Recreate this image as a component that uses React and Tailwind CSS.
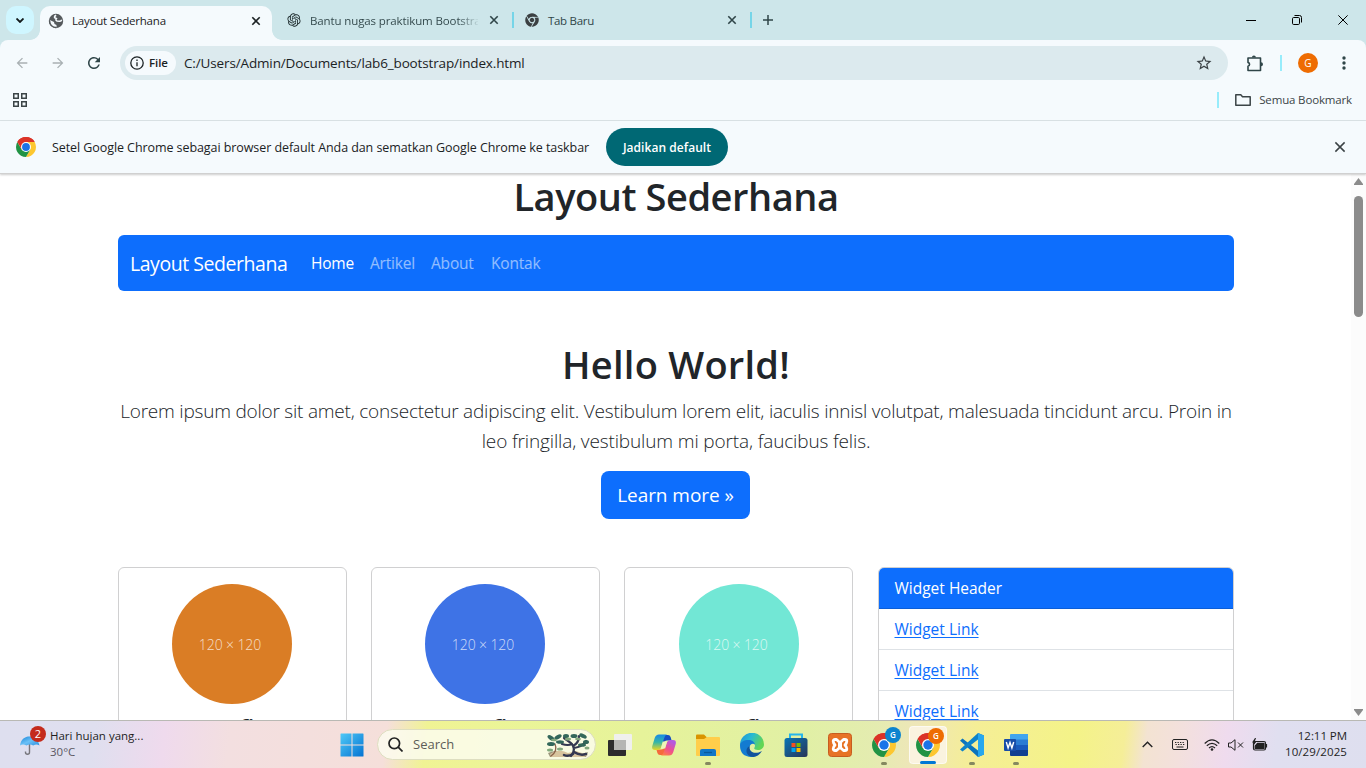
import React from "react";
import { MdStarBorder, MdArrowBack, MdArrowForward, MdRefresh } from "react-icons/md";
import { FaChrome } from "react-icons/fa";
import { RiOpenaiFill } from "react-icons/ri";

const ui = "font-['Open_Sans','Noto_Sans',sans-serif] whitespace-nowrap";

function Cross({ size = 8, width = 1.6 }) {
  return (
    <svg width={size} height={size} viewBox="0 0 8 8" stroke="currentColor" strokeWidth={(width * 8) / size} className="shrink-0 overflow-visible">
      <path d="M0.3 0.3 7.7 7.7M7.7 0.3 0.3 7.7" />
    </svg>
  );
}

function Globe() {
  return (
    <svg width="16" height="16" viewBox="0 0 16 16" className="shrink-0">
      <circle cx="8" cy="8" r="7.2" fill="#55595c" />
      <path d="M8.200 2.300Q6.200 3 6.600 4.800L8.400 5.600Q7.200 7.300 9 8L11.600 8.200Q13.200 8.400 13.700 6.800" fill="none" stroke="#f5fafd" strokeWidth="1.500" />
      <path d="M1.800 7 6 9 6.500 11 8.500 12V14.300Q4.500 14.500 2.400 11Z" fill="#f5fafd" />
      <path d="M1.600 7.500A6.500 6.500 0 0 0 8 14.500" fill="none" stroke="#55595c" strokeWidth="1.400" />
    </svg>
  );
}

function ChromeLogo({ size }) {
  return (
    <svg width={size} height={size} viewBox="0 0 24 24" className="shrink-0">
      <path d="M12 12 1.61 6A12 12 0 0 1 22.39 6Z" fill="#db3327" />
      <path d="M12 12V6H22.39A12 12 0 0 1 12 24L17.2 15Z" fill="#fdc730" />
      <path d="M12 12 17.2 15 12 24A12 12 0 0 1 1.61 6L6.8 15Z" fill="#219344" />
      <path d="M12 6H22.39A12 12 0 0 0 1.61 6L6.8 15 12 12Z" fill="#db3327" />
      <circle cx="12" cy="12" r="6" fill="#fff" />
      <circle cx="12" cy="12" r="4.7" fill="#1a73e8" />
    </svg>
  );
}

function TabStrip() {
  return (
    <div className="flex h-10 shrink-0 bg-[#cde6ea] text-[#2f4548]">
      <div className="ml-1.5 mt-1.5 flex size-7 items-center justify-center rounded-[10px] bg-[#cff6ff] text-[#12191a]">
        <svg width="8" height="5" viewBox="0 0 8 5" fill="none" stroke="currentColor" strokeWidth="1.8"><path d="M.5.5 4 4 7.5.5" /></svg>
      </div>
      <div className="relative ml-1.5 mt-1.5 flex h-[34px] w-[232px] items-center rounded-t-[10px] bg-[#f5fafd] pb-[5px] pl-2 text-[#1c2224]">
        <span className="absolute -left-2.5 bottom-0 size-2.5 bg-[radial-gradient(circle_at_0_0,transparent_9.5px,#f5fafd_10.2px)]" />
        <span className="absolute -right-2.5 bottom-0 size-2.5 bg-[radial-gradient(circle_at_100%_0,transparent_9.5px,#f5fafd_10.2px)]" />
        <Globe />
        <span className={`${ui} ml-2 flex-1 text-[11.5px] tracking-[-0.2px]`}>Layout Sederhana</span>
        <span className="mr-3 flex"><Cross /></span>
      </div>
      <div className="ml-3.5 flex h-10 w-[228px] items-center">
        <RiOpenaiFill className="size-4 text-[#1c2a2c]" />
        <span className={`${ui} ml-2 mt-px w-[168px] overflow-hidden bg-[linear-gradient(90deg,#2f4548_148px,transparent_170px)] bg-clip-text text-[11.5px] tracking-[-0.12px] text-transparent`}>Bantu nugas praktikum Bootstra</span>
        <span className="ml-3 flex"><Cross /></span>
        <span className="ml-3.5 h-4 w-0.5 shrink-0 bg-[#76d5e8]" />
      </div>
      <div className="ml-2.5 flex h-10 w-[228px] items-center">
        <FaChrome className="ml-px size-3.5 text-[#3b4042]" />
        <span className={`${ui} ml-[9px] mt-px flex-1 text-[11.5px] tracking-[-0.3px]`}>Tab Baru</span>
        <Cross />
        <span className="ml-3.5 h-4 w-0.5 bg-[#76d5e8]" />
      </div>
      <svg width="10" height="10" viewBox="0 0 10 10" className="ml-[11px] mt-[15px]" stroke="currentColor" strokeWidth="1.5"><path d="M5 0v10M0 5h10" /></svg>
      <div className="ml-auto flex items-center text-black">
        <span className="mr-9 h-px w-2.5 bg-black" />
        <svg width="10" height="10" viewBox="0 0 10 10" className="mr-9" fill="none" stroke="currentColor"><rect x=".5" y="2.5" width="7" height="7" rx="1.2" /><path d="M2.5.5h5q2 0 2 2v5" /></svg>
        <span className="mr-[18px] flex"><Cross size={10} width={1} /></span>
      </div>
    </div>
  );
}

function Toolbar() {
  return (
    <div className="shrink-0 bg-[#cde6ea]">
      <div className="h-[81px] rounded-t-lg border-b border-[#dbe3e6] bg-[#f5fafd]">
        <div className="flex h-[46px] items-center text-[#2f4548]">
          <MdArrowBack className="ml-3.5 size-4 text-[#a9b0b3]" />
          <MdArrowForward className="ml-5 size-4 text-[#a9b0b3]" />
          <MdRefresh className="ml-[19px] size-[18px]" />
          <div className="ml-[17px] flex h-[34px] w-[1108px] items-center rounded-full bg-[#dceaee] text-[#1b2224]">
            <div className="ml-[5px] flex h-6 w-[51px] items-center rounded-full bg-[#f5fafd] pl-[5px]">
              <svg width="14" height="14" viewBox="0 0 14 14" fill="none" stroke="currentColor" strokeWidth="1.3"><circle cx="7" cy="7" r="6.2" /><path d="M7 6.3v4M7 3.5v1.4" /></svg>
              <span className={`${ui} ml-[5px] text-[11.5px] font-semibold tracking-[-0.1px]`}>File</span>
            </div>
            <span className={`${ui} ml-2 text-[13.5px] tracking-[-0.14px]`}>C:/Users/Admin/Documents/lab6_bootstrap/index.html</span>
            <MdStarBorder className="ml-auto mr-[15px] size-[18px] text-[#3b4245]" />
          </div>
          <svg width="18" height="17" viewBox="0 0 18 17" className="ml-[18px]" fill="none" stroke="currentColor" strokeWidth="1.6" strokeLinejoin="round"><path d="M2 3H14.5V15.500H2V11.300A2 2 0 0 0 2 7.400Z" /><path d="M5.900 2.500a2 2 0 0 1 4 0ZM15 7.300a2 2 0 0 1 0 4Z" fill="currentColor" stroke="none" /></svg>
          <span className="ml-4 h-4 w-0.5 bg-[#97ecfb]" />
          <span className={`${ui} ml-4 flex size-5 items-center justify-center rounded-full bg-[#ee6c02] text-[10px] text-white`}>G</span>
          <svg width="4" height="14" viewBox="0 0 4 14" className="ml-6" fill="currentColor"><circle cx="2" cy="2" r="1.7" /><circle cx="2" cy="7" r="1.7" /><circle cx="2" cy="12" r="1.7" /></svg>
        </div>
        <div className="flex h-7 items-center text-[#3b4447]">
          <svg width="14" height="14" viewBox="0 0 14 14" className="ml-[13px]" fill="none" stroke="currentColor" strokeWidth="1.5"><path d="M.75.75h4.500v4.500H.75zM8.750.75h4.500v4.500h-4.500zM.75 8.750h4.500v4.500H.75zM8.750 8.750h4.500v4.500h-4.500z" /></svg>
          <span className="ml-auto h-4 w-0.5 bg-[#97ecfb]" />
          <svg width="16" height="12" viewBox="0 0 16 12" className="ml-4" fill="none" stroke="currentColor" strokeWidth="1.5" strokeLinejoin="round"><path d="M.8.8h5l1.700 1.900h7.700v8.500H.8Z" /></svg>
          <span className={`${ui} ml-2 mr-3.5 text-[11.5px] tracking-[-0.15px]`}>Semua Bookmark</span>
        </div>
      </div>
    </div>
  );
}

function InfoBar() {
  return (
    <div className="z-10 flex h-[53px] shrink-0 items-center border-b border-[#d0d0d0] bg-[#f5fafd] pl-4 text-[#1b2224] shadow-[0_1px_2px_rgba(0,0,0,0.2)]">
      <ChromeLogo size={20} />
      <span className={`${ui} ml-4 mt-0.5 w-[554px] text-[12.5px] tracking-[-0.075px]`}>Setel Google Chrome sebagai browser default Anda dan sematkan Google Chrome ke taskbar</span>
      <button className={`${ui} h-[38px] w-[122px] rounded-full bg-[#006874] pt-px text-[12px] font-semibold tracking-[0.05px] text-white`}>Jadikan default</button>
      <span className="ml-auto mr-[21px] flex text-[#3b4245]"><Cross size={10} width={1.5} /></span>
    </div>
  );
}

function Placeholder({ color }) {
  return (
    <div className="flex h-[300px] w-[229px] flex-col items-center rounded-md border border-[#d0d0d1] pt-4">
      <div className={`${ui} flex size-[120px] shrink-0 items-center justify-center rounded-full pr-1 text-[14px] font-light tracking-[-0.1px] text-white/75 ${color}`}>120 × 120</div>
      <h4 className={`${ui} mt-[9px] text-[23px] font-semibold leading-[31px]`}>Grafis</h4>
    </div>
  );
}

function Page() {
  return (
    <div className="flex min-h-0 flex-1 bg-white text-[#212529]">
      <div className="h-[546px] flex-1 overflow-hidden pl-[118px] pr-[117px]">
        <h1 className={`${ui} h-[61px] text-center text-[38px] font-semibold leading-[45px] tracking-[-0.45px]`}>Layout Sederhana</h1>
        <nav className={`${ui} flex h-14 items-center rounded-md bg-[#0d6efd] pl-3 pt-0.5 text-[15.5px] tracking-[-0.2px] text-white`}>
          <span className="w-[181px] text-[19.5px] tracking-[-0.45px]">Layout Sederhana</span>
          <span className="w-[59px]">Home</span>
          <span className="w-[61px] text-white/55">Artikel</span>
          <span className="w-[60px] text-white/55">About</span>
          <span className="text-white/55">Kontak</span>
        </nav>
        <section className={`${ui} pt-12 text-center`}>
          <h2 className="mt-px text-[38px] font-semibold leading-12 tracking-[0.25px]">Hello World!</h2>
          <p className="mt-2 text-[19px] font-light leading-[30px] tracking-[-0.215px]">
            <span>Lorem ipsum dolor sit amet, consectetur adipiscing elit. Vestibulum lorem elit, iaculis innisl volutpat, malesuada tincidunt arcu. Proin in</span>
            <br />
            <span className="tracking-[-0.14px]">leo fringilla, vestibulum mi porta, faucibus felis.</span>
          </p>
          <button className="mr-0.5 mt-[15px] h-12 w-[149px] rounded-lg bg-[#0d6efd] pl-px pt-px text-[19px] tracking-[-0.05px] text-white">Learn more »</button>
        </section>
        <div className="mt-12 flex">
          <div className="flex gap-6">
            <Placeholder color="mr-px bg-[#da7d25]" />
            <Placeholder color="mr-px bg-[#3e73e6]" />
            <Placeholder color="bg-[#72e7d5]" />
          </div>
          <div className={`${ui} ml-[25px] flex h-[300px] w-[356px] flex-col overflow-hidden rounded-md border border-[#d0d0d1] text-[15.5px]`}>
            <div className="flex h-[41px] shrink-0 items-center border-b border-[#0b5ed7] bg-[#0d6efd] pl-[15.5px] pt-0.5 text-white">Widget Header</div>
            {[0, 1, 2].map((i) => (
              <div key={i} className="flex h-[41px] shrink-0 items-center border-b border-[#dee2e6] pl-[15.5px] pt-0.5">
                <a className="text-[#0d6efd] underline underline-offset-2">Widget Link</a>
              </div>
            ))}
          </div>
        </div>
      </div>
      <div className="flex w-[15px] flex-col items-center bg-[#fcfcfc] pb-1 pt-1">
        <svg width="9" height="7" viewBox="0 0 9 7" fill="#8b8b8b"><path d="M4.500 0 9 6v1H0V6Z" /></svg>
        <div className="mt-[11px] h-[121px] w-[9px] rounded-full bg-[#8b8b8b]" />
        <svg width="9" height="7" viewBox="0 0 9 7" className="mt-auto" fill="#8b8b8b"><path d="M0 0h9v1L4.500 7 0 1Z" /></svg>
      </div>
    </div>
  );
}

function TaskbarApp({ children, dot, active }) {
  return (
    <div className={`relative flex h-[38px] w-[38px] shrink-0 items-center justify-center rounded ${active ? "border border-white/60 bg-[#faf3df]" : ""}`}>
      {children}
      {dot && <span className="absolute -bottom-px h-[3px] w-1.5 rounded-full bg-[#85885f]" />}
      {active && <span className="absolute -bottom-px h-[3px] w-4 rounded-full bg-[#0078d4]" />}
    </div>
  );
}

function Badge({ color }) {
  return <span className={`${ui} absolute right-0.5 top-px flex size-4 items-center justify-center rounded-full text-[8px] font-semibold text-white ${color}`}>G</span>;
}

function Taskbar() {
  return (
    <div className="flex h-12 shrink-0 border-t border-[#b9b9b4] bg-[linear-gradient(97deg,#dedfef_0px,#dfdfef_95px,#efdaed_165px,#f3dfe0_230px,#f5dfda_385px,#f0f394_425px,#eaf598_520px,#e6f39a_640px,#e1f0a5_800px,#e4ecb0_870px,#eee6b8_910px,#f5ee96_970px,#f4f388_1070px,#f5ee98_1118px,#f3e3d2_1140px,#f3e0dd_1175px,#efdbee_1220px,#e0dff0_1270px,#dedfef_1366px)] text-[#1e1e1e]">
      <div className="relative ml-5 w-[30px]">
        <svg width="20" height="20" viewBox="0 0 20 20" className="mt-[14px]">
          <defs><linearGradient id="umb" x1="0" y1="0" x2="1" y2="1"><stop stopColor="#1784d8" /><stop offset=".5" stopColor="#6bc1f7" /><stop offset="1" stopColor="#2b8fe0" /></linearGradient></defs>
          <path d="M9.500 8v9.200a2 2 0 0 1-4 0v-.7" fill="none" stroke="#77767c" strokeWidth="1.4" />
          <path d="M0 10.500C1 4 5 1.500 9.500 1.500S18 4 19.500 10.500Q16.500 8.500 13.200 10.500 9.700 8.500 6.500 10.500 3 8.500 0 10.500Z" fill="url(#umb)" />
        </svg>
        <span className={`${ui} absolute left-2.5 top-[5px] flex size-4 items-center justify-center rounded-full bg-[#c42b1c] text-[11px] text-white`}>2</span>
      </div>
      <div className={`${ui} mt-[7px] w-[95px] text-[11.5px] leading-4`}>
        <div>Hari hujan yang...</div>
        <div className="text-[#5b5862]">30°C</div>
      </div>
      <div className="ml-[195px] flex h-[47px] items-center">
        <svg width="24" height="24" viewBox="0 0 24 24">
          <defs><linearGradient id="win" x1="0" y1="0" x2="1" y2="1"><stop stopColor="#4fc9f7" /><stop offset="1" stopColor="#0473d2" /></linearGradient></defs>
          <path d="M1 .5h10.500V11.500H.5V1Q.5.5 1 .5ZM12.500.5H23q.5 0 .5.5V11.500h-11ZM.5 12.500h11v11H1q-.5 0-.5-.5ZM12.500 12.500h11V23q0 .5-.5.5H12.500Z" fill="url(#win)" />
        </svg>
        <div className="ml-[13px] flex h-[31px] w-[219px] items-center rounded-full border border-[#dedec0] bg-[#fbfbee]/85">
          <svg width="15" height="15" viewBox="0 0 15 15" className="ml-2.5" fill="none" stroke="#222" strokeWidth="1.7"><circle cx="6.300" cy="6.300" r="5.300" /><path d="m10.200 10.200 4.300 4.300" /></svg>
          <span className={`${ui} ml-2.5 text-[13px] text-[#5d5d58]`}>Search</span>
          <svg width="44" height="26" viewBox="0 0 44 26" className="ml-auto mr-[5px]">
            <path d="M2 21Q10 17 20 21T42 20L40 25H4Z" fill="#9a967c" />
            <path d="M4 22q8-6 18-1l8-2 12 4-4 2H5Z" fill="#d8c49e" />
            <g fill="none" stroke="#343850" strokeLinecap="round">
              <path d="M25 24Q31 17 25 11L18 6M27 14Q33 11 33 4M28 16Q36 15 40 9M26 12Q22 14 16 12" strokeWidth="2.200" />
              <path d="M28 20q6 4 12 2M27 22q-5 3-9 1" strokeWidth="2.500" />
              <path d="M5 24Q12 19 9 12" stroke="#8a634b" strokeWidth="1.300" />
            </g>
            <g fill="#33675a"><ellipse cx="5" cy="6" rx="4" ry="2" transform="rotate(35 5 6)" /><ellipse cx="12" cy="5" rx="4" ry="2" transform="rotate(-30 12 5)" /><ellipse cx="5" cy="12" rx="4" ry="2" /><ellipse cx="14" cy="10" rx="4" ry="1.800" /><ellipse cx="20" cy="4" rx="3" ry="2" /><ellipse cx="28" cy="4" rx="3.500" ry="2" /><ellipse cx="37" cy="4" rx="4" ry="2" transform="rotate(25 37 4)" /><ellipse cx="40" cy="10" rx="3" ry="2" /><ellipse cx="36" cy="13" rx="4" ry="1.800" /></g>
            <g fill="#84a97d"><ellipse cx="8" cy="8" rx="3" ry="1.300" /><ellipse cx="22" cy="7" rx="3" ry="1.500" /><ellipse cx="32" cy="7" rx="3" ry="1.300" /><ellipse cx="4" cy="18" rx="3" ry="1.500" /><ellipse cx="14" cy="17" rx="3" ry="1.500" /><ellipse cx="41" cy="16" rx="2.500" ry="1.500" /></g>
          </svg>
        </div>
        <div className="ml-[5px] flex gap-1.5">
          <TaskbarApp>
            <svg width="24" height="24" viewBox="0 0 24 24"><rect x="0" y="7" width="18" height="16" rx="1" fill="#2c2c2c" /><rect x="6" y="1" width="18" height="16" rx="1" fill="#f0f0ee" /><path d="M6 7h12v10H7q-1 0-1-1Z" fill="#b5b5b3" /></svg>
          </TaskbarApp>
          <TaskbarApp>
            <svg width="24" height="22" viewBox="0 0 24 22">
              <defs><linearGradient id="cpa" x1="0" y1="0" x2="0" y2="1"><stop stopColor="#1589e8" /><stop offset=".5" stopColor="#35b6a7" /><stop offset="1" stopColor="#e8d524" /></linearGradient><linearGradient id="cpb" x1="0" y1="1" x2=".5" y2="0"><stop stopColor="#ff8a38" /><stop offset=".5" stopColor="#f0508c" /><stop offset="1" stopColor="#b45be0" /></linearGradient></defs>
              <path d="M10 1h6q2 0 2.600 2l1 3.500H15Q12 6.500 11 10Z" fill="#154dc4" />
              <path d="M14 21H8q-2 0-2.600-2l-1-3.500H9q3 0 4-3.500Z" fill="#f56a3c" />
              <path d="M7 .5h8q-2 .5-3 4l-2.500 8q-1 3.500-4 3.500H3Q-.7 16 .3 12L2.700 4Q3.800.5 7 .5Z" fill="url(#cpa)" />
              <path d="M17 21.500H9q2-.5 3-4l2.500-8q1-3.500 4-3.500H21q3.700 0 2.700 4L21.300 18q-1.100 3.500-4.300 3.500Z" fill="url(#cpb)" />
              <path d="M10.800 7.500h4.300l-2 7H8.900Z" fill="#eef5b8" />
            </svg>
          </TaskbarApp>
          <TaskbarApp dot>
            <svg width="24" height="22" viewBox="0 0 24 22"><path d="M0 1.500Q0 .5 1 .5h7l3 3v6H0Z" fill="#d99400" /><path d="M0 5h8l3-2h12q1 0 1 1v17q0 1-1 1H1q-1 0-1-1Z" fill="#ffce4b" /><path d="M4 22v-5q0-2 2-2h12q2 0 2 2v5Z" fill="#1077c8" /><path d="M8 18.500h8" stroke="#075a9c" strokeWidth="1.300" /></svg>
          </TaskbarApp>
          <TaskbarApp>
            <svg width="24" height="24" viewBox="0 0 24 24">
              <defs><linearGradient id="eda" x1="0" y1="0" x2="1" y2=".4"><stop stopColor="#1c91d8" /><stop offset=".5" stopColor="#29bad2" /><stop offset="1" stopColor="#62d653" /></linearGradient></defs>
              <path d="M0 12A12 12 0 0 1 24 11.500C24 15 21 17 18 17 15 17 13.500 16 14.500 14.500 16 12 14 9 10 9 5 9 1 12 0 12Z" fill="url(#eda)" />
              <path d="M0 12.500C0 9 4 7 8.500 7 12 7 14.500 9 15 11.500 13 10 9.500 11 9.500 15 9.500 19 14 21.500 18.500 20.500Q15.500 24 11.500 24 0 23.500 0 12.500Z" fill="#137bd1" />
              <path d="M9.500 13C8.500 19 15 22 22 18 19 23 14.500 25 10.500 23.500 5 21 5.500 15 9.500 13Z" fill="#11539d" />
            </svg>
          </TaskbarApp>
          <TaskbarApp>
            <svg width="24" height="24" viewBox="0 0 24 24"><defs><linearGradient id="sto" x1="0" y1="0" x2="1" y2="1"><stop stopColor="#0876b6" /><stop offset="1" stopColor="#293456" /></linearGradient></defs><path d="M6 7V1.500h12V7" fill="none" stroke="#25b6ec" strokeWidth="2" /><rect x=".5" y="5" width="23" height="19" rx="2.500" fill="url(#sto)" /><path d="M7.500 10h4v4h-4Z" fill="#f25022" /><path d="M12.500 10h4v4h-4Z" fill="#7fba00" /><path d="M7.500 15h4v4h-4Z" fill="#00a4ef" /><path d="M12.500 15h4v4h-4Z" fill="#ffb900" /></svg>
          </TaskbarApp>
          <TaskbarApp>
            <svg width="24" height="24" viewBox="0 0 24 24"><rect x=".5" y=".5" width="23" height="23" rx="3" fill="#e77325" stroke="#c65d20" /><path d="M7 6.500H8.500L12 9.700 15.500 6.500H17Q18.800 6.500 18.800 8.300 18.800 10 17 12 18.800 14 18.800 15.700 18.800 17.500 17 17.500H15.500L12 14.300 8.500 17.500H7Q5.200 17.500 5.200 15.700 5.200 14 7 12 5.200 10 5.200 8.300 5.200 6.500 7 6.500Z" fill="none" stroke="#fff" strokeWidth="2.800" strokeLinejoin="round" /><path d="M10 12h4" stroke="#fff" strokeWidth="4" /></svg>
          </TaskbarApp>
          <TaskbarApp dot><ChromeLogo size={24} /><Badge color="bg-[#0c84cf]" /></TaskbarApp>
          <TaskbarApp active><ChromeLogo size={24} /><Badge color="bg-[#ee6c02]" /></TaskbarApp>
          <TaskbarApp dot>
            <svg width="24" height="24" viewBox="0 0 24 24"><path d="M18 0 24 2.500v19L18 24 1 8.500 0 7.800 2.500 5.500 18 17.500Z" fill="#0b74bd" /><path d="M18 6.500 2.500 18.500 0 16.500 18 0Z" fill="#0d83ca" /><path d="M18 0 24 2.500v19L18 24Z" fill="#27a7ee" /></svg>
          </TaskbarApp>
          <TaskbarApp dot>
            <svg width="24" height="22" viewBox="0 0 24 22"><path d="M6 1q0-1 1-1h17v6H6Z" fill="#41a5ee" /><path d="M6 5.500h18V11H6Z" fill="#2b7cd3" /><path d="M6 11h18v5.500H6Z" fill="#185abd" /><path d="M6 16h18v5q0 1-1 1H7q-1 0-1-1Z" fill="#103f91" /><rect y="5" width="12" height="12" rx="1" fill="#174da8" /><path d="m2.300 8 1.800 6L6 8.500 7.900 14l1.800-6" fill="none" stroke="#fff" strokeWidth="1.400" /></svg>
          </TaskbarApp>
        </div>
      </div>
      <div className="ml-auto mr-[19px] flex items-center">
        <svg width="11" height="7" viewBox="0 0 11 7" fill="none" stroke="#222" strokeWidth="1.400"><path d="M.7 6 5.500 1.200 10.300 6" /></svg>
        <svg width="16" height="11" viewBox="0 0 16 11" className="ml-[19px]" fill="none" stroke="#222"><rect x=".5" y=".5" width="15" height="10" rx="1.500" /><path d="M3 3.500h10M3.500 5.500h9" strokeWidth="1.200" strokeDasharray="1.300 1.200" /><path d="M4.500 8h7" /></svg>
        <svg width="16" height="12" viewBox="0 0 16 12" className="ml-4" fill="none" stroke="#222" strokeWidth="1.200"><path d="M.7 4.500Q8-2.700 15.300 4.500M2.800 6.800q5.200-5 10.400 0M5 9q3-2.800 6 0" /><circle cx="8" cy="10.500" r="1.300" fill="#222" stroke="none" /></svg>
        <svg width="16" height="12" viewBox="0 0 16 12" className="ml-2" fill="none" stroke="#222"><path d="M.5 4v4H3l4 3.300V.7L3 4ZM10 3.500l5 5M15 3.500l-5 5" /></svg>
        <svg width="16" height="13" viewBox="0 0 16 13" className="ml-2" fill="none" stroke="#222"><rect x="1.500" y="3.500" width="12" height="8.500" rx="1.500" strokeWidth="1.200" /><path d="M5.500 5.300H12v5H3.200V8ZM14.500 6v3.500" fill="#222" strokeWidth="1.200" /><path d="M3 0 0 4.500h2L1 8l4-5H3L4 0Z" fill="#222" stroke="none" /></svg>
        <div className={`${ui} ml-[15px] w-16 text-right text-[11.5px] leading-4`}>
          <div className="-mt-0.5 tracking-[-0.05px]">12:11 PM</div>
          <div className="tracking-[0.1px]">10/29/2025</div>
        </div>
      </div>
    </div>
  );
}

export default function App() {
  return (
    <div className="flex h-screen w-screen flex-col overflow-hidden">
      <TabStrip />
      <Toolbar />
      <InfoBar />
      <Page />
      <Taskbar />
    </div>
  );
}
